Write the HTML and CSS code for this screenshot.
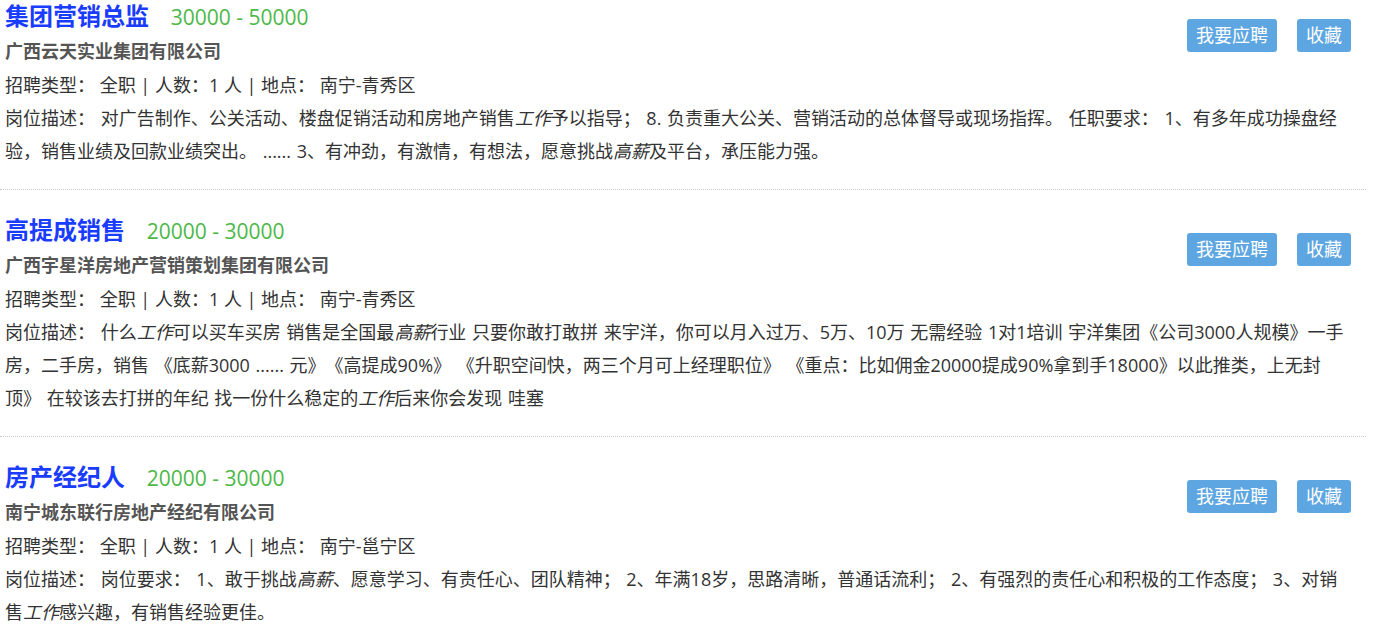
FILE: index.html
```html
<!DOCTYPE html>
<html lang="zh-CN">
<head>
    <meta charset="UTF-8">
    <title>职位列表</title>
    <link rel="stylesheet" href="styles.css">
</head>
<body>
    <div class="job-list">
        <div class="job">
            <div class="job-actions">
                <a class="btn" href="#">我要应聘</a>
                <a class="btn" href="#">收藏</a>
            </div>
            <div class="job-head">
                <a class="job-title" href="#">集团营销总监</a>
                <span class="salary">30000 - 50000</span>
            </div>
            <div class="company">广西云天实业集团有限公司</div>
            <p class="info">招聘类型： 全职 | 人数：1 人 | 地点： 南宁-青秀区</p>
            <p class="desc">岗位描述： 对广告制作、公关活动、楼盘促销活动和房地产销售<em>工作</em>予以指导； 8. 负责重大公关、营销活动的总体督导或现场指挥。 任职要求： 1、有多年成功操盘经验，销售业绩及回款业绩突出。 ...... 3、有冲劲，有激情，有想法，愿意挑战<em>高薪</em>及平台，承压能力强。</p>
        </div>

        <div class="job">
            <div class="job-actions">
                <a class="btn" href="#">我要应聘</a>
                <a class="btn" href="#">收藏</a>
            </div>
            <div class="job-head">
                <a class="job-title" href="#">高提成销售</a>
                <span class="salary">20000 - 30000</span>
            </div>
            <div class="company">广西宇星洋房地产营销策划集团有限公司</div>
            <p class="info">招聘类型： 全职 | 人数：1 人 | 地点： 南宁-青秀区</p>
            <p class="desc">岗位描述： 什么<em>工作</em>可以买车买房 销售是全国最<em>高薪</em>行业 只要你敢打敢拼 来宇洋，你可以月入过万、5万、10万 无需经验 1对1培训 宇洋集团《公司3000人规模》一手房，二手房，销售 《底薪3000 ...... 元》《高提成90%》 《升职空间快，两三个月可上经理职位》 《重点：比如佣金20000提成90%拿到手18000》以此推类，上无封顶》 在较该去打拼的年纪 找一份什么稳定的<em>工作</em>后来你会发现 哇塞</p>
        </div>

        <div class="job">
            <div class="job-actions">
                <a class="btn" href="#">我要应聘</a>
                <a class="btn" href="#">收藏</a>
            </div>
            <div class="job-head">
                <a class="job-title" href="#">房产经纪人</a>
                <span class="salary">20000 - 30000</span>
            </div>
            <div class="company">南宁城东联行房地产经纪有限公司</div>
            <p class="info">招聘类型： 全职 | 人数：1 人 | 地点： 南宁-邕宁区</p>
            <p class="desc">岗位描述： 岗位要求： 1、敢于挑战<em>高薪</em>、愿意学习、有责任心、团队精神； 2、年满18岁，思路清晰，普通话流利； 2、有强烈的责任心和积极的工作态度； 3、对销售<em>工作</em>感兴趣，有销售经验更佳。</p>
        </div>
    </div>
</body>
</html>
```

FILE: styles.css
```css
body {
    margin: 0;
    background: #fff;
    color: #333;
    font-family: "Open Sans", "Noto Sans CJK SC", sans-serif;
    font-size: 18px;
    text-spacing-trim: space-all;
}

.job-list {
    width: 1366px;
}

.job {
    padding: 24px 17px 21px 5px;
    border-bottom: 1px dotted #c8c8c8;
}

.job:first-child {
    padding-top: 0;
}

.job-head {
    line-height: 32px;
}

.job-title {
    color: #1a3cff;
    font-size: 24px;
    font-weight: bold;
    text-decoration: none;
    margin-right: 17px;
}

.salary {
    color: #4cb848;
    font-size: 21px;
}

.company {
    color: #555;
    font-size: 18px;
    font-weight: bold;
    line-height: 35px;
}

.info,
.desc {
    margin: 0;
    line-height: 33px;
}

.desc {
    word-spacing: 1px;
}

.desc em {
    font-style: italic;
}

/* buttons sit at the right of the title */
.job-actions {
    float: right;
    display: flex;
    gap: 20px;
    margin-top: 19px;
    margin-right: -2px;
}

.btn {
    display: block;
    height: 33px;
    line-height: 33px;
    padding: 0 9px;
    background: #5ea6e1;
    color: #fff;
    font-size: 18px;
    border-radius: 3px;
    text-decoration: none;
}
```
